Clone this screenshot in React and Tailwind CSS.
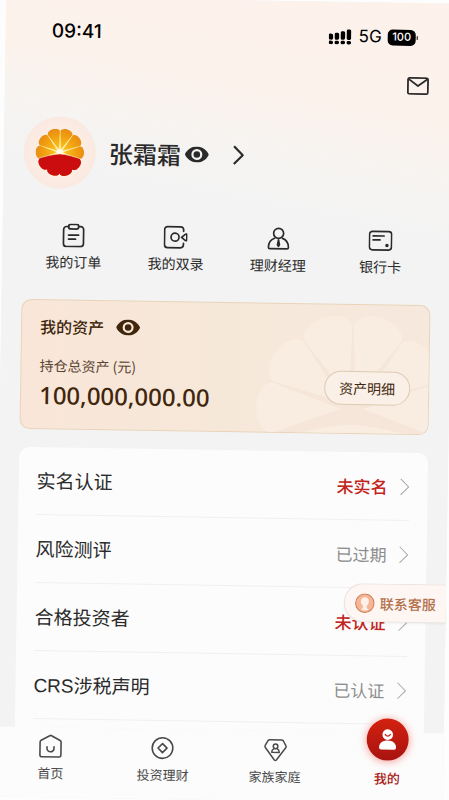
import React from "react";

const LOBES = 10;

function polar(cx, cy, radius, turn) {
  const a = (turn * 2 * Math.PI) / LOBES - Math.PI / 2;
  return `${(cx + radius * Math.cos(a)).toFixed(2)} ${(cy + radius * Math.sin(a)).toFixed(2)}`;
}

// Ten-lobed blossom outline; the notches sit on `radius`, the flat-tipped lobes reach past it.
function blossom(cx, cy, radius) {
  const lobes = Array.from({ length: LOBES }, (_, i) => {
    const outer = radius * 1.25;
    return `C${polar(cx, cy, outer, i + 0.14)} ${polar(cx, cy, outer, i + 0.86)} ${polar(cx, cy, radius, i + 1)}`;
  });
  return `M${polar(cx, cy, radius, 0)}${lobes.join("")}Z`;
}

// Thin wedges running from the centre to each notch of the upper half.
function rays(cx, cy, radius, width) {
  return [-3, -2, -1, 0, 1, 2, 3]
    .map((i) => {
      const a = (i * 2 * Math.PI) / LOBES - Math.PI / 2;
      const dx = Math.cos(a);
      const dy = Math.sin(a);
      const w = width;
      return `M${cx - dy * w} ${cy + dx * w}L${cx + dx * radius - dy * 0.4} ${cy + dy * radius + dx * 0.4}L${cx + dx * radius + dy * 0.4} ${cy + dy * radius - dx * 0.4}L${cx + dy * w} ${cy - dx * w}Z`;
    })
    .join("");
}

function BrandLogo() {
  return (
    <svg viewBox="0 0 100 100" className="size-[50px]" aria-hidden="true">
      <defs>
        <radialGradient id="sun" cx="50%" cy="50%" r="50%">
          <stop offset="0" stopColor="#fde36a" />
          <stop offset="0.3" stopColor="#f8b81a" />
          <stop offset="0.7" stopColor="#f09c10" />
          <stop offset="1" stopColor="#e98a14" />
        </radialGradient>
        <clipPath id="blossomClip">
          <path d={blossom(50, 50, 42)} />
        </clipPath>
      </defs>
      <g clipPath="url(#blossomClip)">
        <rect width="100" height="100" fill="url(#sun)" />
        <path d={rays(50, 50, 46, 2)} fill="#fff0a8" />
        <circle cx="50" cy="50" r="7" fill="#fffbe6" />
        <path d="M-2 66Q30 54 50 53Q70 54 102 66V102H-2Z" fill="#cb0d10" stroke="#fff0b8" strokeWidth="1.200" />
      </g>
    </svg>
  );
}

function Eye({ className }) {
  return (
    <svg viewBox="0 0 24 16" className={className} aria-hidden="true">
      <path fill="currentColor" fillRule="evenodd" d="M12 0C6.500 0 2 3.500 0 8c2 4.500 6.500 8 12 8s10-3.500 12-8C22 3.500 17.500 0 12 0Zm0 2.500a5.500 5.500 0 1 1 0 11a5.500 5.500 0 0 1 0-11Z" />
      <circle cx="12" cy="8" r="3.300" fill="currentColor" />
    </svg>
  );
}

function Chevron({ className }) {
  return (
    <svg viewBox="0 0 10 18" fill="none" stroke="currentColor" className={className} aria-hidden="true">
      <path d="M1 1l8 8l-8 8" />
    </svg>
  );
}

function Line({ children, width = 1.7 }) {
  return (
    <svg viewBox="0 0 24 24" fill="none" stroke="currentColor" strokeWidth={width} strokeLinecap="round" strokeLinejoin="round" className="size-6" aria-hidden="true">
      {children}
    </svg>
  );
}

const shortcuts = [
  {
    label: "我的订单",
    icon: (
      <Line>
        <path d="M7 3H5a3 3 0 0 0-3 3v14a3 3 0 0 0 3 3h14a3 3 0 0 0 3-3V6a3 3 0 0 0-3-3h-2" />
        <rect x="7" y="0.800" width="10" height="4.600" rx="2" />
        <path d="M7 11.500h10M7 15.500h7" />
      </Line>
    ),
  },
  {
    label: "我的双录",
    icon: (
      <Line>
        <path d="M20 6V4.500a3 3 0 0 0-3-3H4a3 3 0 0 0-3 3v15a3 3 0 0 0 3 3h13a3 3 0 0 0 3-3V18" />
        <circle cx="11.500" cy="12" r="4" />
        <path d="M18 12l4-3.200q1.300-.6 1.300.8v4.800q0 1.400-1.300.8Z" />
      </Line>
    ),
  },
  {
    label: "理财经理",
    icon: (
      <Line>
        <circle cx="12" cy="6.500" r="5" />
        <path d="M8 11.500c-4 1.500-6 5-6 9q0 1.500 1.500 1.500h17q1.500 0 1.500-1.500c0-4-2-7.500-6-9" />
        <path d="M12 13l-1 5l1 1.500l1-1.500Z" fill="currentColor" />
      </Line>
    ),
  },
  {
    label: "银行卡",
    icon: (
      <Line>
        <rect x="0.900" y="3" width="22.200" height="18.500" rx="3" />
        <path d="M4.500 7.500h11M4.500 11.500h7" />
        <circle cx="18.500" cy="17" r="0.900" fill="currentColor" />
      </Line>
    ),
  },
];

const records = [
  { label: "实名认证", status: "未实名", alert: true },
  { label: "风险测评", status: "已过期", alert: false },
  { label: "合格投资者", status: "未认证", alert: true },
  { label: "CRS涉税声明", status: "已认证", alert: false },
];

const tabs = [
  {
    label: "首页",
    icon: (
      <Line width={1.6}>
        <path d="M12 1L21.500 6Q22.500 6.600 22.500 8V20.500q0 2-2 2h-17q-2 0-2-2V8Q1.500 6.600 2.500 6Z" />
        <path d="M8.500 12.500v1.500a3.500 3.500 0 0 0 7 0v-1.500" />
      </Line>
    ),
  },
  {
    label: "投资理财",
    icon: (
      <Line width={1.6}>
        <circle cx="12" cy="12" r="10.300" />
        <path d="M12 7.500l4.500 4.500l-4.500 4.500L7.500 12Z" />
      </Line>
    ),
  },
  {
    label: "家族家庭",
    icon: (
      <Line width={1.5}>
        <path d="M6 2h12q1 0 1.600.8l2.800 5q.6 1-.2 2L13 22.200q-1 1.100-2 0L1.800 9.800q-.8-1-.2-2l2.800-5Q5 2 6 2Z" />
        <circle cx="12" cy="8.500" r="2.300" />
        <path d="M10.500 10.800c-1.500.7-2.300 1.800-2.300 3.700h7.600c0-1.900-.8-3-2.300-3.700" />
      </Line>
    ),
  },
];

function StatusBar() {
  return (
    <div className="flex h-[66px] items-center justify-between pt-[3px] pr-[37px] pl-[46px] font-['Inter',sans-serif] text-black">
      <span className="text-[19px] font-medium">09:41</span>
      <div className="flex items-center">
        <svg viewBox="0 0 23 16" className="h-4 w-[23px]" aria-label="信号">
          <rect x="0" y="5" width="4.400" height="6" rx="1.500" />
          <rect x="6" y="4" width="4.400" height="7" rx="1.500" />
          <rect x="12" y="2.500" width="4.400" height="8.500" rx="1.500" />
          <rect x="18" y="0.500" width="4.400" height="10.500" rx="1.500" />
          <rect x="0" y="12" width="4.400" height="3.500" rx="1.500" />
          <rect x="6" y="12" width="4.400" height="3.500" rx="1.500" />
          <rect x="12" y="12" width="4.400" height="3.500" rx="1.500" />
          <rect x="18" y="12" width="4.400" height="3.500" rx="1.500" />
        </svg>
        <span className="ml-[7px] text-[17px]">5G</span>
        <span className="ml-[6px] flex h-4 w-7 items-center justify-center rounded-[5px] bg-black text-[11px] font-medium text-white">100</span>
        <span className="ml-px h-1 w-px rounded-full bg-black" />
      </div>
    </div>
  );
}

export default function App() {
  return (
    <div className="min-h-screen overflow-hidden bg-[#fdfdfd] font-['Noto_Sans_CJK_SC',sans-serif] text-[#2a2a2a]">
      <main className="relative flex min-h-screen rotate-[0.9deg] flex-col bg-[#f3f3f3] bg-[linear-gradient(190deg,#fdf2eb_0%,#fcf2ec_14%,#f7f4f1_20%,#f3f3f3_27%)]">
        <StatusBar />

        <div className="flex h-[34px] items-center justify-end pr-[25px]">
          <button type="button" aria-label="消息">
            <svg viewBox="0 0 22 18" fill="none" stroke="currentColor" strokeWidth="1.800" strokeLinejoin="round" className="h-[18px] w-[22px]">
              <rect x="1" y="1" width="20" height="16" rx="1.500" />
              <path d="M1.500 2l9.500 7l9.500-7" />
            </svg>
          </button>
        </div>

        <header className="mt-[19px] flex items-center px-5">
          <div className="flex size-[72px] items-center justify-center rounded-full bg-radial from-[#fcf3ee] to-[#fae5da]">
            <BrandLogo />
          </div>
          <h1 className="ml-[13px] text-2xl font-medium">张霜霜</h1>
          <button type="button" aria-label="隐藏姓名" className="ml-1">
            <Eye className="h-4 w-6" />
          </button>
          <button type="button" aria-label="个人资料" className="ml-6">
            <Chevron className="h-5 w-[11px] stroke-2" />
          </button>
        </header>

        <nav className="mt-[35px] grid grid-cols-4 px-5">
          {shortcuts.map((s) => (
            <a key={s.label} href="#" className="flex flex-col items-center gap-1 text-sm leading-5">
              {s.icon}
              {s.label}
            </a>
          ))}
        </nav>

        <section className="relative mx-5 mt-7 overflow-hidden rounded-[10px] border border-[#e9d3b6] bg-linear-to-r from-[#f9e6d9] via-[#f6e8d9] to-[#f7e8de] px-[18px] pt-[14px] pb-[17px] text-[#40260c]">
          <svg viewBox="0 0 200 200" className="absolute top-0 -right-6 size-[200px]" aria-hidden="true">
            <path d={blossom(100, 104, 83)} fill="#f9ede2" />
            <path d={rays(100, 104, 88, 4)} fill="#f6e6da" />
            <path d="M10 136Q55 111 100 109Q145 111 190 136V142Q145 122 100 120Q55 122 10 142Z" fill="#f6e6da" />
          </svg>
          <div className="relative flex items-center gap-3">
            <h2 className="text-base leading-6 font-medium">我的资产</h2>
            <button type="button" aria-label="隐藏资产">
              <Eye className="h-4 w-6" />
            </button>
          </div>
          <div className="relative mt-[17px] flex items-center justify-between">
            <div>
              <p className="text-sm leading-5 text-[#5a4431]">持仓总资产 (元)</p>
              <p className="mt-1 font-['Noto_Sans',sans-serif] text-2xl leading-8 font-medium">100,000,000.00</p>
            </div>
            <button type="button" className="h-[34px] rounded-full border border-[#dccbb0] bg-[#faf0e7] px-[14px] text-sm">
              资产明细
            </button>
          </div>
        </section>

        <section className="mx-5 mt-[18px] flex-1 rounded-t-[10px] bg-[#fcfcfc] px-[18px] pb-2">
          <ul>
            {records.map((r) => (
              <li key={r.label} className="border-b border-[#f0f0f0]">
                <a href="#" className="flex h-[67px] items-center">
                  <span className="flex-1 pt-[3px] font-['Liberation_Sans','Noto_Sans_CJK_SC',sans-serif] text-[19px] leading-7">{r.label}</span>
                  <span className={r.alert ? "text-[17px] font-medium text-[#c3241d]" : "text-[17px] text-[#8c8c8c]"}>{r.status}</span>
                  <Chevron className="ml-3 h-[18px] w-[10px] text-[#a8a8a8]" />
                </a>
              </li>
            ))}
          </ul>
        </section>

        <button type="button" className="absolute top-[581px] right-0 flex h-[39px] items-center gap-[5px] rounded-l-full border border-r-0 border-[#ebe3e0] bg-[#fdf6f3] pr-[10px] pl-[10px] text-sm font-medium text-[#b3704a] shadow-xs">
          <svg viewBox="0 0 20 20" className="size-5" aria-hidden="true">
            <circle cx="10" cy="10" r="9.200" fill="#f8b595" stroke="#c98059" />
            <path d="M10 4c-3 0-4.200 2.200-4 4.600c.1 1.600.9 2.800 2 3.600v2.300c0 .8-1 1-2 1.600c2.400 1.700 5.600 1.700 8 0c-1-.6-2-.8-2-1.600v-2.300c1.100-.8 1.900-2 2-3.600C14.200 6.200 13 4 10 4Z" fill="#fdf0e9" />
          </svg>
          联系客服
        </button>

        <nav className="relative flex h-[70px] items-end bg-[#fcfcfc] pb-[14px] text-[13px] leading-5 text-[#4a4a4a]">
          {tabs.map((t) => (
            <a key={t.label} href="#" className="flex flex-1 flex-col items-center gap-[5px]">
              {t.icon}
              {t.label}
            </a>
          ))}
          <a href="#" aria-current="page" className="flex flex-1 flex-col items-center gap-2 font-medium text-[#a81814]">
            <span className="flex size-[42px] items-center justify-center rounded-full bg-linear-to-b from-[#d3210f] to-[#a81310] shadow-[0_1px_8px_#f59a94]">
              <svg viewBox="0 0 24 24" className="size-6" aria-hidden="true">
                <circle cx="12" cy="7" r="5.300" fill="#fff" />
                <path d="M9.500 7q2.500 3 5 0" fill="none" stroke="#c01a12" strokeWidth="1.400" strokeLinecap="round" />
                <path d="M3.500 20c0-4.500 3.500-7 8.500-7s8.500 2.500 8.500 7q0 2-2 2h-13q-2 0-2-2Z" fill="#fff" />
              </svg>
            </span>
            我的
          </a>
        </nav>
      </main>
    </div>
  );
}
